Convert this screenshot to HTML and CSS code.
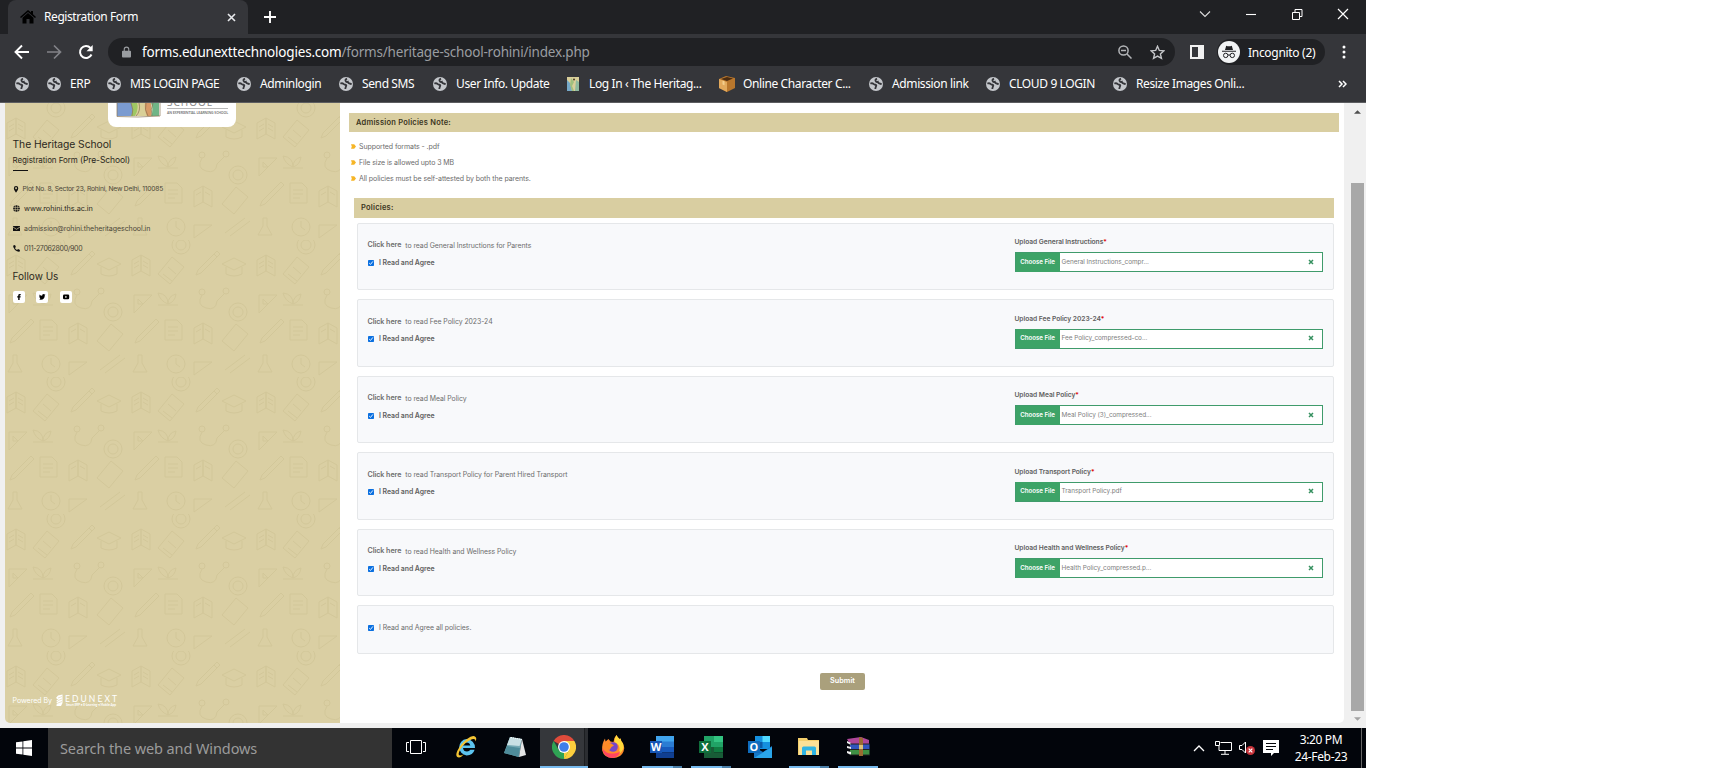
FILE: index.html
```
<!DOCTYPE html>
<html lang="en">
<head>
<meta charset="utf-8">
<title>Registration Form</title>
<link rel="stylesheet" href="styles.css">
</head>
<body>
<svg class="defs" aria-hidden="true">
  <symbol id="globe" viewBox="0 0 14 14"><circle cx="7" cy="7" r="7" fill="#c4c7cb"/><path d="M1.300 6.500q2.200-.6 3.200.4t2 .8q1.200.3.600 1.500t-.8 2.800M8 1.600Q6 2.600 6.600 4t2.200.8q.4 1.600 1.800 1.700t2 1" fill="none" stroke="#35363a" stroke-width="1.800"/></symbol>
  <symbol id="clear" viewBox="0 0 6 6"><path d="M1 1l4 4M5 1L1 5" stroke="#35905f" stroke-width="1.500"/></symbol>
  <symbol id="bullet" viewBox="0 0 5 5"><path d="M0 .300h3.200L5 2.500 3.200 4.700H0l.8-2.200z" fill="#f6b526"/></symbol>
  <symbol id="check" viewBox="0 0 6 6"><rect width="6" height="6" rx=".8" fill="#0b70e0"/><path d="M1.200 3.100l1.300 1.300 2.400-3" fill="none" stroke="#fff" stroke-width=".9"/></symbol>
</svg>
<div class="desktop">
  <header class="browser">
    <div class="tabstrip">
      <div class="tab">
        <svg class="home" viewBox="0 0 16 14"><path d="M8 0L0 7l1 1 7-6 7 6 1-1-3-2.700V1h-2v1.600zM8 3L2.500 7.800V13.500h4V9h3v4.500h4V7.800z" fill="#000"/></svg>
        <span class="tab-title">Registration Form</span>
        <svg class="tab-close" viewBox="0 0 9 9"><path d="M1 1l7 7M8 1L1 8" stroke="#e8eaed" stroke-width="1.600"/></svg>
      </div>
      <svg class="newtab" viewBox="0 0 12 12"><path d="M6 0v12M0 6h12" stroke="#fff" stroke-width="1.900"/></svg>
      <div class="winctl">
        <svg viewBox="0 0 12 12"><path d="M1 3.500l5 5 5-5" fill="none" stroke="#ddd" stroke-width="1.100"/></svg>
        <svg viewBox="0 0 12 12"><path d="M1 6.500h10" stroke="#fff" stroke-width="1.100"/></svg>
        <svg viewBox="0 0 12 12"><path d="M1.500 4.500h7v7h-7zM4 4V1.500h7v7H9" fill="none" stroke="#fff"/></svg>
        <svg viewBox="0 0 12 12"><path d="M1 1l10 10M11 1L1 11" stroke="#fff" stroke-width="1.200"/></svg>
      </div>
    </div>
    <div class="toolbar">
      <svg class="nav" viewBox="0 0 16 16"><path d="M15 8H2M8 1.500L1.500 8 8 14.500" fill="none" stroke="#fff" stroke-width="1.900"/></svg>
      <svg class="nav" viewBox="0 0 16 16"><path d="M1 8h13M8 1.500L14.500 8 8 14.500" fill="none" stroke="#828388" stroke-width="1.700"/></svg>
      <svg class="nav" viewBox="0 0 16 16"><path d="M13.500 10.500A6 6 0 1 1 12.500 4" fill="none" stroke="#fff" stroke-width="2"/><path d="M14.700 1v6.200H8.500z" fill="#fff"/></svg>
      <div class="omnibox">
        <svg class="lock" viewBox="0 0 10 12"><path d="M1 4.500h8a1 1 0 0 1 1 1V11a1 1 0 0 1-1 1H1a1 1 0 0 1-1-1V5.500a1 1 0 0 1 1-1z" fill="#9a9da1"/><path d="M2.500 5V3a2.500 2.400 0 0 1 5 0v2" fill="none" stroke="#9a9da1" stroke-width="1.200"/></svg>
        <span class="url"><b>forms.edunexttechnologies.com</b>/forms/heritage-school-rohini/index.php</span>
        <svg class="zoom" viewBox="0 0 14 14"><circle cx="5.500" cy="5.500" r="4.600" fill="none" stroke="#b3b5b8" stroke-width="1.500"/><path d="M3 5.500h5M9 9l4.500 4.500" stroke="#b3b5b8" stroke-width="1.500"/></svg>
        <svg class="star" viewBox="0 0 14 14"><path d="M7 1.200l1.700 3.900 4.200.4-3.200 2.800 1 4.200L7 10.300l-3.700 2.200 1-4.200L1.100 5.500l4.200-.4z" fill="none" stroke="#c4c6c9" stroke-width="1.300"/></svg>
      </div>
      <svg class="panel" viewBox="0 0 14 14"><path d="M0 0h14v14H0zM2 2v10h6V2z" fill="#f1f1f1" fill-rule="evenodd"/></svg>
      <div class="incognito">
        <svg viewBox="0 0 22 22"><circle cx="11" cy="11" r="11" fill="#f1f3f4"/><path d="M7 9l1.200-4.200Q11 5.800 13.800 4.800L15 9zM4 9.800h14v1H4z" fill="#202124"/><circle cx="7.700" cy="14.400" r="2.200" fill="none" stroke="#202124"/><circle cx="14.300" cy="14.400" r="2.200" fill="none" stroke="#202124"/><path d="M10 14h2" stroke="#202124"/></svg>
        <span>Incognito (2)</span>
      </div>
      <svg class="menu" viewBox="0 0 4 14"><circle cx="2" cy="2" r="1.500" fill="#fff"/><circle cx="2" cy="7" r="1.500" fill="#fff"/><circle cx="2" cy="12" r="1.500" fill="#fff"/></svg>
    </div>
    <nav class="bookmarks">
      <a><svg><use href="#globe"/></svg></a>
      <a><svg><use href="#globe"/></svg><span>ERP</span></a>
      <a><svg><use href="#globe"/></svg><span>MIS LOGIN PAGE</span></a>
      <a><svg><use href="#globe"/></svg><span>Adminlogin</span></a>
      <a><svg><use href="#globe"/></svg><span>Send SMS</span></a>
      <a><svg><use href="#globe"/></svg><span>User Info. Update</span></a>
      <a><svg viewBox="0 0 14 14"><path d="M1 0h12v14H1z" fill="#d9cf9a"/><path d="M1 3l3 3 2 8H1z" fill="#76a9c8"/><path d="M5 1l3 4-2 4 2 5H6L4 8z" fill="#9fbf7f"/><path d="M10 3l3 2v9H9z" fill="#8fba9f"/><circle cx="8" cy="2.500" r="1" fill="#4a3a20"/></svg><span>Log In ‹ The Heritag...</span></a>
      <a><svg class="box" viewBox="0 0 16 16"><path d="M0 3l7-3 9 2v10l-8 4-8-4z" fill="#b9772d"/><path d="M0 3l8 3v10l-8-4z" fill="#e2a95c"/><path d="M2 3l6-2 6 1.500L8 5z" fill="#4b2c10"/><path d="M3.500 4.500l2 .8v4l-2-.8z" fill="#f4cf8e"/></svg><span>Online Character C...</span></a>
      <a><svg><use href="#globe"/></svg><span>Admission link</span></a>
      <a><svg><use href="#globe"/></svg><span>CLOUD 9 LOGIN</span></a>
      <a><svg><use href="#globe"/></svg><span>Resize Images Onli...</span></a>
      <svg class="more" viewBox="0 0 9 8"><path d="M1 1l3 3-3 3M5 1l3 3-3 3" fill="none" stroke="#fff" stroke-width="1.500"/></svg>
    </nav>
  </header>

  <main class="page">
    <aside class="side">
      <svg class="doodles" aria-hidden="true">
        <defs><pattern id="doodle" width="125" height="137" patternUnits="userSpaceOnUse">
          <g fill="none" stroke="#b5a974" stroke-width="1">
            <path d="M2 20l9-5v16l-9 5zM11 15l9 5v16l-9-5zM4 24l5-3M4 28l5-3M13 21l5 3M13 25l5 3"/>
            <path d="M28 34l14-17 12 10-14 17zM33 34l9 7M38 27l8 7"/>
            <circle cx="51" cy="5" r="9"/><circle cx="51" cy="5" r="5"/>
            <path d="M68 30l19-19 3 3-19 19-5 2zM84 14l3 3"/>
            <path d="M92 24l12-6 12 6-12 6zM96 27v7q8 4 16 0v-7"/>
            <path d="M4 55h18L4 73zM8 59v5h5z"/>
            <path d="M72 55q-6 10 4 13t11-7M87 61l8-8"/><circle cx="72" cy="52" r="3"/><circle cx="96" cy="51" r="3"/>
            <path d="M28 65h20M38 64q-8-3-10-11 10 1 10 11 0-8 8-10-1 8-8 10"/>
            <path d="M64 88l9-5v16l-9 5zM73 83l9 5v16l-9-5zM66 92l5-3M75 89l5 3"/>
            <path d="M92 101l14-17 12 10-14 17z"/>
            <path d="M35 80h12l5 5v15H35zM38 87h10M38 91h10M38 95h7"/>
            <path d="M7 98l19-19 3 3-19 19-5 2z"/>
            <circle cx="108" cy="72" r="9"/><circle cx="108" cy="72" r="5"/>
            <path d="M64 122h18l-18 13zM8 115v8l-5 9h14l-5-9v-8z"/>
            <circle cx="46" cy="124" r="9"/><path d="M46 118v6l4 3"/>
            <path d="M95 130l20-15M100 133l20-15"/>
          </g>
        </pattern></defs>
        <rect width="100%" height="100%" fill="url(#doodle)"/>
      </svg>
      <div class="side-body">
        <div class="logo">
          <svg viewBox="0 0 128 24"><path d="M9 0h42v13H9z" fill="#e9dcb8"/><path d="M9 0h15q2 7 0 13H9z" fill="#7b9bd0"/><path d="M23 0h7q1 7-3 13h-4q3-7 0-13z" fill="#9fc763"/><path d="M29 0h8q-1 8 3 13H27q4-7 2-13z" fill="#d9d098"/><path d="M37 0h6v13h-4q-3-7-2-13z" fill="#d89b67"/><path d="M43 0h8v13h-8q3-7 0-13z" fill="#6fb586"/><path d="M9 0v13.500l21 .5 22-1V0M23 0q3 7 1 13M31 0q2 8-3 13M38 0q-2 7 2 13M45 0q-3 7-1 13" fill="none" stroke="#8a7350" stroke-width=".7"/><path d="M59 5.500h61" stroke="#999" stroke-width=".7"/><text x="59" y="2.500" class="logo-word">SCHOOL</text><text x="59" y="11" class="logo-tag">AN EXPERIENTIAL LEARNING SCHOOL</text></svg>
        </div>
        <h1>The Heritage School</h1>
        <h2>Registration Form <span>(Pre-School)</span></h2>
        <div class="rule"></div>
        <ul class="contact">
          <li class="addr"><svg viewBox="0 0 7 8"><path d="M3 0A2.500 2.500 0 0 1 5.500 2.500C5.500 4.500 3 7.500 3 7.500S.500 4.500.500 2.500A2.500 2.500 0 0 1 3 0zm0 1.500a1 1 0 1 0 .01 0z"/></svg><span>Plot No. 8, Sector 23, Rohini, New Delhi, 110085</span></li>
          <li class="web"><svg viewBox="0 0 7 7"><circle cx="3.500" cy="3.500" r="3.300"/><path d="M0 2.400h7M0 4.600h7M2.300 0v7M4.700 0v7" stroke="#dacfa3" stroke-width=".55"/></svg><span>www.rohini.ths.ac.in</span></li>
          <li class="mail"><svg viewBox="0 0 7 7"><path d="M0 1h7v5H0z"/><path d="M0 2l3.500 2.300L7 2" fill="none" stroke="#dacfa3" stroke-width=".7"/></svg><span>admission@rohini.theheritageschool.in</span></li>
          <li class="phone"><svg viewBox="0 0 7 7"><path d="M.3.500L2 0l.9 2-1 .9q.8 1.500 2.200 2.200l.9-1L7 5l-.5 1.700Q5.500 7 4 6.300 1.300 5 .4 2.300 0 1.200.3.500z"/></svg><span>011-27062800/900</span></li>
        </ul>
        <h3>Follow Us</h3>
        <div class="social">
          <a><svg viewBox="0 0 12 12"><path d="M5.200 9V6.500H4.200V5.200h1V4.400Q5.200 3 6.700 3h1v1.200H7.100q-.5 0-.5.500v.5h1.100l-.2 1.300h-.9V9z"/></svg></a>
          <a><svg viewBox="0 0 12 12"><path d="M3.500 3.500q1.100 1.300 2.600 1.300Q6.100 3 7.500 3l1 .4.9-.2-.6 1Q8.700 8.600 4.800 8.800L3 8.400l1.300-.4Q2.900 6.200 3.500 3.500z"/></svg></a>
          <a><svg viewBox="0 0 12 12"><rect x="3" y="3.500" width="6.200" height="4.800" rx="1.200"/><path d="M5.300 4.800v2.200l1.900-1.100z" fill="#fff"/></svg></a>
        </div>
        <footer class="powered"><span>Powered By</span>
          <svg viewBox="0 0 62 13"><path d="M0 4l2-2.500L6.500.500V9L5 12H1L0 11l2-1.500L0 9l2-1.500L0 7l2-1.500z" fill="#fff"/><path d="M2 4l4-1.500M2 6.500L6 5M2 9l4-1.500" stroke="#dacfa3" stroke-width=".6"/><text x="9" y="7.800" class="edu" textLength="52">EDUNEXT</text><text x="10" y="12" class="edutag" textLength="50">Smart ERP • E-Learning • Mobile App</text></svg>
        </footer>
      </div>
    </aside>

    <section class="content">
      <h4 class="bar">Admission Policies Note:</h4>
      <ul class="notes">
        <li><svg><use href="#bullet"/></svg><span>Supported formats - .pdf</span></li>
        <li><svg><use href="#bullet"/></svg><span>File size is allowed upto 3 MB</span></li>
        <li><svg><use href="#bullet"/></svg><span>All policies must be self-attested by both the parents.</span></li>
      </ul>
      <h4 class="bar policies">Policies:</h4>
      <div class="cards">
        <article class="card">
          <div><p class="read"><b>Click here</b><span>to read General Instructions for Parents</span></p><p class="agree"><svg><use href="#check"/></svg><b>I Read and Agree</b></p></div>
          <div class="upload"><label>Upload General Instructions<i>*</i></label><div class="file"><b>Choose File</b><span>General Instructions_compr...</span><svg><use href="#clear"/></svg></div></div>
        </article>
        <article class="card">
          <div><p class="read"><b>Click here</b><span>to read Fee Policy 2023-24</span></p><p class="agree"><svg><use href="#check"/></svg><b>I Read and Agree</b></p></div>
          <div class="upload"><label>Upload Fee Policy 2023-24<i>*</i></label><div class="file"><b>Choose File</b><span>Fee Policy_compressed-co...</span><svg><use href="#clear"/></svg></div></div>
        </article>
        <article class="card">
          <div><p class="read"><b>Click here</b><span>to read Meal Policy</span></p><p class="agree"><svg><use href="#check"/></svg><b>I Read and Agree</b></p></div>
          <div class="upload"><label>Upload Meal Policy<i>*</i></label><div class="file"><b>Choose File</b><span>Meal Policy (3)_compressed...</span><svg><use href="#clear"/></svg></div></div>
        </article>
        <article class="card">
          <div><p class="read"><b>Click here</b><span>to read Transport Policy for Parent Hired Transport</span></p><p class="agree"><svg><use href="#check"/></svg><b>I Read and Agree</b></p></div>
          <div class="upload"><label>Upload Transport Policy<i>*</i></label><div class="file"><b>Choose File</b><span>Transport Policy.pdf</span><svg><use href="#clear"/></svg></div></div>
        </article>
        <article class="card">
          <div><p class="read"><b>Click here</b><span>to read Health and Wellness Policy</span></p><p class="agree"><svg><use href="#check"/></svg><b>I Read and Agree</b></p></div>
          <div class="upload"><label>Upload Health and Wellness Policy<i>*</i></label><div class="file"><b>Choose File</b><span>Health Policy_compressed.p...</span><svg><use href="#clear"/></svg></div></div>
        </article>
        <article class="card all"><p class="agree"><svg><use href="#check"/></svg><span>I Read and Agree all policies.</span></p></article>
      </div>
      <button class="submit">Submit</button>
    </section>

    <div class="scroll">
      <svg viewBox="0 0 8 4"><path d="M0 4l4-4 4 4z" fill="#505050"/></svg>
      <div class="thumb"></div>
      <svg viewBox="0 0 8 4"><path d="M0 0l4 4 4-4z" fill="#a3a3a3"/></svg>
    </div>
  </main>

  <footer class="taskbar">
    <div class="start"><svg viewBox="0 0 16 16"><path d="M0 2.300L6.500 1.400v6.200H0zM7.300 1.200L16 0v7.600H7.300zM0 8.400h6.500v6.200L0 13.700zM7.300 8.400H16V16l-8.700-1.200z" fill="#fff"/></svg></div>
    <div class="search">Search the web and Windows</div>
    <div class="apps">
      <div class="app"><svg class="view" viewBox="0 0 20 14"><path d="M4.500.500h11v13h-11zM3 2.500H.500v9H3M17 2.500h2.500v9H17" fill="none" stroke="#fff"/></svg></div>
      <div class="app ie"><svg viewBox="0 0 24 24"><path d="M12.500 4a8.500 8.500 0 0 1 8.500 9H9q.5 3.500 4 3.500 2.300 0 3.300-1.700h4.300q-1.600 5.700-8 5.700A8.300 8.300 0 0 1 12.500 4zm0 3.500Q9.500 7.500 9 10.500h7.300q-.6-3-3.800-3z" fill="#5cc4f0"/><path d="M5 22.500Q.500 22 3.500 15.500 7 8.500 13 4t8.500-2q1.500 1.300 0 4.500.2-3.500-3.500-2.300Q11.500 6.500 6.500 14 3 20.500 6 20.500q2 0 4-1.500-3 3.500-5 3.500z" fill="#f4c534"/></svg></div>
      <div class="app"><svg viewBox="0 0 24 24"><path d="M7 2l12 2-3 18-15-4z" fill="#76aab5"/><path d="M7 2l12 2-2.500 7L4 10z" fill="#c9e0e4"/><path d="M19 4l4 16-7 2z" fill="#e4e6e6"/><path d="M4 11l13 2-1.500 9L1 18z" fill="#4e8c9a"/><path d="M8 2.500l11 2" stroke="#fff" stroke-dasharray="1 1"/></svg></div>
      <div class="app active"><svg viewBox="0 0 24 24"><path d="M12 12L1.600 6A12 12 0 0 1 22.400 6z" fill="#df4b3b"/><path d="M12 12V6h10.400A12 12 0 0 1 12 24l-1-1z" fill="#fcce3d"/><path d="M12 24A12 12 0 0 1 1.600 6l5.200 9 5.200 3 5.200-3z" fill="#2fa354"/><path d="M12 24l5.200-9L12 12z" fill="#fcce3d"/><circle cx="12" cy="12" r="6" fill="#fff"/><circle cx="12" cy="12" r="4.800" fill="#3f7ee8"/></svg></div>
      <div class="app"><svg viewBox="0 0 24 24"><path d="M15.500 0q1 2.500 3 4l1-.5q.5 3 2.500 5 2 4 .5 8-2.500 6.500-10.500 6.500Q3 23 1.200 15.500.500 9 4 3.500l.5 3L7.500 4l2 2.500 3 .5q0-4 3-7z" fill="#ff8a2b"/><path d="M15.500 0q1 2.500 3 4l1-.5q.5 3 2.500 5 1.500 4-1 7.500-1.500 2.500-4 2.500 3-4 .5-8.500-1.500-1.500-4-3-.5-4 2-7z" fill="#ffd93b"/><path d="M1.200 13Q5 19 11 18.500q6 .5 8.500-3-2 7.500-8.500 7.500Q2.500 22.500 1.200 13z" fill="#ff4561"/><circle cx="12" cy="12" r="4.800" fill="#7546c9"/><path d="M5 8.500q4-1.500 8 2l-2.500 1.500-2 3q-3-2-3.500-6.500z" fill="#ff8b23"/></svg></div>
      <div class="app run"><svg viewBox="0 0 24 22"><path d="M6 0h18v6H6z" fill="#41a5ee"/><path d="M6 5.500h18V11H6z" fill="#2b7cd3"/><path d="M6 11h18v5.500H6z" fill="#185abd"/><path d="M6 16.500h18V22H6z" fill="#103f91"/><path d="M0 5h12v12H0z" fill="#1756b5"/><text x="6" y="14.500" class="let">W</text></svg></div>
      <div class="app run"><svg viewBox="0 0 24 22"><path d="M5 0h10v22H5z" fill="#21a366"/><path d="M15 0h9v6h-9z" fill="#33c481"/><path d="M15 6h9v5h-9z" fill="#21a366"/><path d="M5 11h10v6H5z" fill="#185c37"/><path d="M15 11h9v5.500h-9z" fill="#107c41"/><path d="M5 16.500h19V22H5z" fill="#185c37"/><path d="M0 5h12v12H0z" fill="#0f6f3b"/><text x="6" y="14.500" class="let">X</text></svg></div>
      <div class="app"><svg viewBox="0 0 24 22"><path d="M7 0h15v13H7z" fill="#1490df"/><path d="M14.500 0H22v6h-7.500z" fill="#50d9ff"/><path d="M7 6h7.500v6H7z" fill="#0a5ba8"/><path d="M6 11l9 5 9-6v12H6z" fill="#1577c6"/><path d="M6 22L24 11v11z" fill="#2aa5ea"/><path d="M0 5h12v12H0z" fill="#0f6cbd"/><text x="6" y="14.500" class="let">O</text></svg></div>
      <div class="app run"><svg viewBox="0 0 24 22"><path d="M1 2h9l1 2h11v15H1z" fill="#f4cf6c"/><path d="M2 5h20v14H2z" fill="#fbe197"/><path d="M5 19v-7q0-1.500 1.500-1.500h11Q19 10.500 19 12v7h-4v-4.500H9V19z" fill="#2fb4e3"/></svg></div>
      <div class="app run whole"><svg viewBox="0 0 24 22"><path d="M1 3l14-2 8 3v4H4z" fill="#b0479a"/><path d="M4 8h19.500v5H4z" fill="#3155bd"/><path d="M4 14h19.500v5H4z" fill="#3f9144"/><path d="M1 5l4 2v2L1 7zM1 10l4 1v2l-4-1zM1 15l4 1v3l-4-2z" fill="#eee"/><path d="M4 8h20M4 13.500h20M4 19h20" stroke="#222"/><path d="M13 1l4 1v18h-4z" fill="#9a6b32"/><path d="M13 9h4v4h-4z" fill="#ddc27a"/></svg></div>
    </div>
    <div class="tray">
      <svg class="up" viewBox="0 0 12 8"><path d="M1 7l5-5 5 5" fill="none" stroke="#fff" stroke-width="1.300"/></svg>
      <svg class="net" viewBox="0 0 17 14"><path d="M5.500 1.500h11v8H4V5M.500.500h4v4h-4zM10 9.500V13M6 13.300h8" fill="none" stroke="#fff"/></svg>
      <svg class="vol" viewBox="0 0 17 14"><path d="M.500 4.500H3l3.500-3.500v11L3 8.500H.500z" fill="none" stroke="#fff"/><circle cx="11.500" cy="9.500" r="4.500" fill="#c7333a"/><path d="M9.700 7.700l3.600 3.600M13.300 7.700l-3.600 3.600" stroke="#fff" stroke-width="1.200"/></svg>
      <svg class="msg" viewBox="0 0 16 16"><path d="M0 0h16v13h-5l-3 3v-3H0z" fill="#fff"/><path d="M3 3.500h10M3 6.500h10M3 9.500h7" stroke="#05070b"/></svg>
      <div class="clock"><span>3:20 PM</span><span>24-Feb-23</span></div>
      <div class="peek"></div>
    </div>
  </footer>
</div>
</body>
</html>
```
FILE: styles.css
```
* { box-sizing: border-box; }
body { margin: 0; background: #fff; font-family: "Noto Sans", sans-serif; }
svg { display: block; flex: none; }
ul, h1, h2, h3, h4, p { margin: 0; padding: 0; font-weight: 400; list-style: none; }
.defs { position: absolute; width: 0; height: 0; }
.desktop { width: 1366px; height: 768px; display: flex; flex-direction: column; overflow: hidden; }

/* Browser chrome */
.browser { height: 103px; background: #35363a; border-bottom: 1px solid #5c5d60; color: #fff; flex: none; }
.tabstrip { height: 34px; background: #202124; display: flex; align-items: center; padding-left: 8px; }
.tab { width: 240px; height: 34px; background: #35363a; border-radius: 8px 8px 0 0; display: flex; align-items: center; padding: 0 12px; }
.home { width: 16px; height: 14px; }
.tab-title { margin-left: 8px; padding-bottom: 1px; font-size: 12px; letter-spacing: -.42px; flex: 1; white-space: nowrap; }
.tab-close { width: 9px; height: 9px; }
.newtab { width: 12px; height: 12px; margin-left: 16px; }
.winctl { margin-left: auto; display: flex; gap: 34px; padding: 0 17px 6px 0; }
.winctl svg { width: 12px; height: 12px; }
.toolbar { height: 36px; display: flex; align-items: center; padding-left: 14px; }
.nav { width: 16px; height: 16px; margin-right: 16px; }
.omnibox { width: 1067px; height: 28px; margin-left: -2px; border-radius: 14px; background: #202124; display: flex; align-items: center; padding: 0 10px 0 14px; }
.lock { width: 9px; height: 12px; }
.url { margin-left: 11px; flex: 1; font-size: 13.500px; letter-spacing: -.2px; color: #9a9da1; white-space: nowrap; }
.url b { font-weight: 400; color: #fff; }
.zoom { width: 14px; height: 14px; margin-right: 18px; }
.star { width: 15px; height: 15px; }
.panel { width: 14px; height: 14px; margin-left: 15px; }
.incognito { margin-left: 13px; width: 108px; height: 26px; border-radius: 13px; background: #202124; display: flex; align-items: center; padding-left: 1px; font-size: 12px; letter-spacing: -.3px; white-space: nowrap; }
.incognito svg { width: 22px; height: 22px; margin-right: 8px; }
.menu { width: 4px; height: 14px; margin-left: 17px; }
.bookmarks { height: 27px; padding-left: 15px; display: grid; grid-template-columns: 32px 60px 130px 102px 94px 133px 153px 150px 117px 127px 225px 9px; align-items: center; font-size: 12px; letter-spacing: -.38px; }
.bookmarks a { display: flex; align-items: center; gap: 9px; white-space: nowrap; }
.bookmarks a svg { width: 14px; height: 14px; }
.bookmarks a .box { width: 16px; height: 16px; margin-right: -1px; }
.more { width: 9px; height: 8px; }

/* Page */
.page { height: 625px; background: #f0f0f0; display: flex; padding: 0 0 5px 5px; color: #6c6c6c; font-family: Inter, sans-serif; flex: none; }
.side { width: 335px; background: #dacfa3; border-radius: 0 0 0 5px; overflow: hidden; display: grid; color: #2b2820; }
.doodles { grid-area: 1 / 1; width: 335px; height: 620px; opacity: .2; }
.side-body { grid-area: 1 / 1; display: flex; flex-direction: column; padding: 0 7.500px 16px; z-index: 1; }
.logo { width: 128px; height: 24px; background: #fff; border-radius: 0 0 8px 8px; margin-left: 95.500px; }
.logo-word { font: 10px "Noto Sans", sans-serif; fill: #8c8c8c; letter-spacing: 1px; }
.logo-tag { font: 600 3.500px "Noto Sans", sans-serif; fill: #777; letter-spacing: -.1px; }
.side h1 { font-size: 10.300px; line-height: 14px; margin-top: 10px; letter-spacing: -.05px; }
.side h2 { font-size: 8px; line-height: 12px; margin-top: 3px; letter-spacing: -.08px; }
.side h2 span { font-size: 8.500px; }
.rule { width: 15px; height: 1px; background: #111; margin-top: 4px; }
.contact { padding-top: 8px; }
.contact li { display: flex; align-items: center; gap: 4.500px; height: 20px; font-size: 7px; letter-spacing: -.05px; white-space: nowrap; color: #4a4638; }
.contact svg { width: 7px; height: 7px; fill: #111; }
.contact .addr { gap: 3px; font-size: 6.700px; letter-spacing: -.2px; }
.contact .web { font-size: 7.300px; height: 19px; color: #2b2820; }
.contact .phone { letter-spacing: -.3px; }
.side h3 { font-size: 10px; line-height: 14px; margin-top: 11px; }
.social { display: flex; gap: 11.500px; margin-top: 7.500px; }
.social a { width: 12px; height: 12px; border-radius: 2px; background: #fff; }
.powered { margin-top: auto; display: flex; align-items: center; gap: 4px; color: #fff; font-size: 7px; }
.powered svg { width: 62px; height: 13px; }
.edu { font: 8.500px Lato, sans-serif; fill: #fff; }
.edutag { font: 700 3px Lato, sans-serif; fill: #fff; }

.content { width: 1004px; background: #fff; border-radius: 0 0 5px 0; padding: 10px 5px 0 9px; display: flex; flex-direction: column; }
.bar { height: 19px; background: #d9cea1; color: #3b3522; font-size: 7.500px; font-weight: 600; letter-spacing: .22px; line-height: 19px; padding-left: 7px; }
.notes { padding: 6px 0 1px 2px; font-size: 7px; letter-spacing: -.08px; }
.notes li { display: flex; align-items: center; gap: 3px; height: 16px; }
.notes svg { width: 5px; height: 5px; }
.policies { margin: 11px 5px 5px; height: 20px; line-height: 20px; }
.cards { display: flex; flex-direction: column; gap: 9.400px; padding: 0 5px 0 8px; }
.card { height: 67.100px; border: 1px solid #e5e7e9; border-radius: 2px; background: #f8f9fb; padding-left: 9.500px; display: grid; grid-template-columns: 647px 1fr; font-size: 6.900px; letter-spacing: -.05px; white-space: nowrap; }
.read { display: flex; gap: 4px; margin-top: 16.200px; line-height: 10px; }
.read b { font-size: 7.100px; font-weight: 600; }
.read span { position: relative; top: .5px; }
.agree { display: flex; align-items: center; gap: 5.500px; margin-top: 7.500px; line-height: 10px; }
.agree b, .upload label, .file b { font-weight: 600; color: #606060; }
.agree svg { width: 6px; height: 6px; }
.upload { padding-top: 13.200px; font-size: 6.700px; }
.upload label { display: block; line-height: 10px; }
.upload i { color: #d00; font-style: normal; }
.file { width: 308px; height: 20px; margin-top: 5px; border: 1px solid #3f9b6b; background: #fff; display: flex; align-items: center; color: #808080; font-size: 6.400px; letter-spacing: -.03px; padding: 0 8px 1px 0; }
.file b { width: 44px; height: 19px; margin-bottom: -1px; line-height: 17px; background: #3da367; color: #fff; text-align: center; font-size: 6.200px; }
.file span { flex: 1; padding-left: 2px; }
.file svg { width: 6px; height: 6px; }
.all { height: 49px; }
.all .agree { margin-top: 17px; height: 10px; }
.submit { width: 45px; height: 17px; margin: 19px 0 0 471px; padding: 0 0 2px; border: 0; border-radius: 2px; background: #aaa07c; color: #fff; font: 600 7.300px Inter, sans-serif; }
.scroll { margin-left: auto; width: 17px; height: 620px; display: flex; flex-direction: column; align-items: center; padding-top: 7px; }
.scroll svg { width: 7px; height: 4px; }
.thumb { width: 13px; height: 528px; margin: 69px 0 6px; background: #a8a8a8; }

/* Taskbar */
.taskbar { height: 40px; background: #02050b; display: flex; flex: none; color: #fff; }
.start { width: 48px; display: grid; place-items: center; }
.start svg { width: 16px; height: 16px; }
.search { width: 344px; background: #333; color: #9b9b9b; font-size: 14.500px; line-height: 41px; padding-left: 12px; letter-spacing: -.1px; }
.apps { display: flex; gap: 1px; }
.app { width: 48px; height: 40px; display: grid; place-items: center; border-bottom: 2px solid transparent; }
.ie { margin-left: 1px; }
.app svg { width: 24px; height: 24px; }
.app .view { width: 20px; height: 14px; }
.active { background: linear-gradient(90deg, #35373b 44px, #1b1d20 44px, #1b1d20 45px, #2b2d31 45px); border-bottom-color: #76b9ed; }
.run { background: linear-gradient(90deg, transparent 4px, #76b9ed 4px, #76b9ed 35px, #4b7fa8 35px, #4b7fa8 44px, transparent 44px) 0 38px / 48px 2px no-repeat border-box; }
.whole { background: linear-gradient(90deg, transparent 4px, #76b9ed 4px, #76b9ed 44px, transparent 44px) 0 38px / 48px 2px no-repeat border-box; }
.let { font: 700 11px "Open Sans", sans-serif; fill: #fff; text-anchor: middle; }
.tray { margin-left: auto; display: flex; align-items: center; }
.up { width: 12px; height: 8px; margin-right: 10px; }
.net { width: 17px; height: 14px; margin-right: 7px; }
.vol { width: 17px; height: 14px; margin-right: 7px; }
.msg { width: 16px; height: 16px; margin-right: 9px; }
.clock { width: 66px; display: flex; flex-direction: column; align-items: center; font-size: 12px; line-height: 17px; letter-spacing: -.35px; }
.peek { width: 5px; height: 40px; border-left: 1px solid #666; margin-left: 7px; }
```
